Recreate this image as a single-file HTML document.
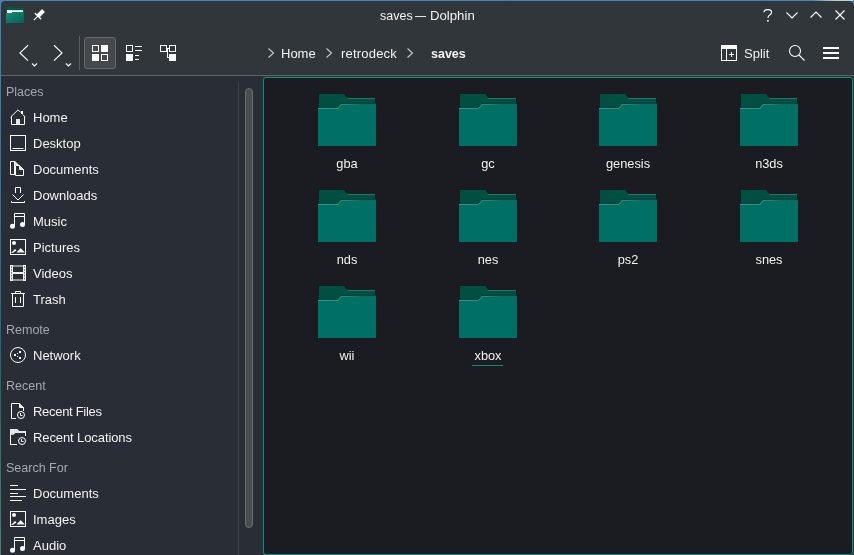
<!DOCTYPE html>
<html><head><meta charset="utf-8">
<style>
*{margin:0;padding:0;box-sizing:border-box}
html,body{width:854px;height:555px;overflow:hidden}
body{position:relative;background:linear-gradient(180deg,#4585b8 0px,#2f6f90 40%,#22686c 70%,#4a8272 100%);font-family:"Liberation Sans",sans-serif;color:#f2f2f2}
.a{position:absolute}
.t{position:absolute;white-space:nowrap;line-height:20px;will-change:transform}
svg{position:absolute;overflow:visible}
.hdr{color:#a1a9b1}
</style></head><body>
<div class="a" style="left:812px;top:0;width:41px;height:1px;background:linear-gradient(90deg,#4585b8,#b8d0c8 55%,#c0d6cc)"></div>
<div class="a" style="left:1px;top:1px;width:853px;height:554px;background:#31363b;border-radius:4px 5px 0 0"></div>
<svg style="left:6px;top:7px" width="18" height="16" viewBox="0 0 18 16">
<defs><linearGradient id="tg" x1="0" y1="0" x2="1" y2="1"><stop offset="0" stop-color="#1a8a7a"/><stop offset="1" stop-color="#006357"/></linearGradient></defs>
<path d="M0 0h7.5l1 1H18V16H0z" fill="#005a4c"/>
<path d="M1 3.2h16V5H1z" fill="#fafafa"/><path d="M1 3.2h5v2.8H1z" fill="#fafafa"/>
<path d="M0 6h5.5l1-1H18v11H0z" fill="url(#tg)"/>
</svg>
<svg style="left:33px;top:12px" width="12" height="12" viewBox="0 0 12 12">
<polygon points="9.1,-3 11.9,0 6.5,5.4 3.6,2.5" fill="#fcfcfc"/>
<path d="M2.3 1.4L7.7 6.7" stroke="#fcfcfc" stroke-width="1.4" stroke-linecap="round"/>
<path d="M4.6 4.3L1.3 7.6" stroke="#fcfcfc" stroke-width="1.2" stroke-linecap="round"/>
</svg>
<div class="t" style="left:380px;top:5.87px;font-size:12.5px">saves</div>
<div class="a" style="left:415px;top:16px;width:11px;height:1px;background:#e4e4e4"></div>
<div class="t" style="left:430px;top:5.63px;font-size:13.2px">Dolphin</div>
<svg style="left:763px;top:9px" width="10" height="13"><path d="M1 3.2C1 1.5 2.6 0.6 4.8 0.6S8.6 1.6 8.6 3.3c0 1.6-1.2 2.2-2.2 2.9-0.8 0.5-1.3 1-1.3 2.1V9" fill="none" stroke="#fcfcfc" stroke-width="1.1"/><rect x="4.1" y="11" width="1.6" height="1.6" fill="#fcfcfc"/></svg>
<svg style="left:786px;top:12px" width="14" height="8"><path d="M0.5 0.5l5.5 5.5 5.5-5.5" fill="none" stroke="#fcfcfc" stroke-width="1.2"/></svg>
<svg style="left:810px;top:11px" width="14" height="8"><path d="M0.5 6.5l5.5-5.5 5.5 5.5" fill="none" stroke="#fcfcfc" stroke-width="1.2"/></svg>
<svg style="left:835px;top:10px" width="12" height="12"><path d="M0.5 0.5l9 9M9.5 0.5l-9 9" fill="none" stroke="#fcfcfc" stroke-width="1.2"/></svg>
<svg style="left:18px;top:44px" width="12" height="20"><path d="M10 1.2L2 8.9l8 7.7" fill="none" stroke="#fcfcfc" stroke-width="1.2"/></svg>
<svg style="left:31px;top:62px" width="8" height="6"><path d="M1 1.5l2.5 2.5L6 1.5" fill="none" stroke="#fcfcfc" stroke-width="1.1"/></svg>
<svg style="left:53px;top:44px" width="12" height="20"><path d="M1 1.2l8 7.7-8 7.7" fill="none" stroke="#fcfcfc" stroke-width="1.2"/></svg>
<svg style="left:65px;top:62px" width="8" height="6"><path d="M1 1.5l2.5 2.5L6 1.5" fill="none" stroke="#fcfcfc" stroke-width="1.1"/></svg>
<div class="a" style="left:79px;top:36px;width:1px;height:34px;background:#5a5e63"></div>
<div class="a" style="left:84px;top:37px;width:32px;height:32px;border:1px solid #686c71;border-radius:3px;background:#45494e"></div>
<svg style="left:92px;top:45px" width="16" height="16" viewBox="0 0 16 16" fill="#fcfcfc">
<path d="M0 0h7v7H0zM1 1v5h5V1z"/><rect x="9" y="0" width="7" height="7"/><rect x="0" y="9" width="7" height="7"/><path d="M9 9h7v7H9zM10 10v5h5v-5z"/>
</svg>
<svg style="left:126px;top:45px" width="16" height="16" viewBox="0 0 16 16" fill="#fcfcfc">
<path d="M0 0h7v7H0zM1 1v5h5V1z"/><rect x="9" y="1" width="7" height="1"/><rect x="9" y="5" width="7" height="1"/><rect x="0" y="9" width="7" height="7"/><rect x="9" y="10" width="4" height="1"/><rect x="9" y="14" width="4" height="1"/>
</svg>
<svg style="left:160px;top:45px" width="16" height="16" viewBox="0 0 16 16" fill="#fcfcfc">
<path d="M0 0h7v7H0zM1 1v5h5V1z"/><path d="M9 0h7v7H9zM10 1v5h5V1z"/><rect x="7" y="3" width="2" height="1"/><rect x="7" y="3" width="1" height="10"/><rect x="7" y="12" width="2" height="1"/><rect x="9" y="9" width="7" height="7"/>
</svg>
<svg style="left:268px;top:48px" width="8" height="12"><path d="M0.5 0.5l5 4.5-5 4.5" fill="none" stroke="#c8cbce" stroke-width="1.1"/></svg>
<div class="t" style="left:281px;top:43.50px;font-size:13px">Home</div>
<svg style="left:326px;top:48px" width="8" height="12"><path d="M0.5 0.5l5 4.5-5 4.5" fill="none" stroke="#c8cbce" stroke-width="1.1"/></svg>
<div class="t" style="left:341px;top:43.50px;font-size:13px;letter-spacing:0.2px">retrodeck</div>
<svg style="left:407px;top:48px" width="8" height="12"><path d="M0.5 0.5l5 4.5-5 4.5" fill="none" stroke="#c8cbce" stroke-width="1.1"/></svg>
<div class="t" style="left:431px;top:43.67px;font-size:12.5px;font-weight:bold">saves</div>
<svg style="left:721px;top:45px" width="16" height="16" viewBox="0 0 16 16" fill="#fcfcfc">
<path d="M0 0h16v16H0zM1 4v11h4V4zM6 4v11h9V4z"/><rect x="10" y="7" width="1" height="5"/><rect x="8" y="9" width="5" height="1"/>
</svg>
<div class="t" style="left:744px;top:43.50px;font-size:13px">Split</div>
<svg style="left:789px;top:45px" width="18" height="18"><circle cx="6" cy="6" r="5.5" fill="none" stroke="#fcfcfc" stroke-width="1.1"/><path d="M10 10l5.5 5.5" stroke="#fcfcfc" stroke-width="1.1"/></svg>
<svg style="left:823px;top:47px" width="16" height="12" fill="#fcfcfc"><rect x="0" y="0" width="16" height="2"/><rect x="0" y="5" width="16" height="2"/><rect x="0" y="10" width="16" height="2"/></svg>
<div class="a" style="left:1px;top:75px;width:853px;height:1px;background:#5f6367"></div>
<div class="a" style="left:1px;top:76px;width:262px;height:479px;background:#292d36"></div>
<div class="a" style="left:238px;top:82px;width:1px;height:473px;background:#3e4347"></div>
<div class="a" style="left:245px;top:88px;width:8px;height:440px;border:1px solid #6a6e72;border-radius:4px;background:#4a4e52"></div>
<div class="t" style="left:6px;top:81.67px;font-size:12.5px;color:#a1a9b1">Places</div>
<svg style="left:10px;top:109px" width="16" height="16" viewBox="0 0 16 16"><path d="M0.6 8.2L8 0.8l2.6 2.6M12.6 5.4l2.8 2.8" fill="none" stroke="#fcfcfc" stroke-width="1"/><path d="M1.5 7.5v8h13v-8" fill="none" stroke="#fcfcfc" stroke-width="1"/><rect x="6" y="10" width="4" height="6" fill="#e8e8e8"/><rect x="11" y="2" width="2" height="3" fill="#fcfcfc"/></svg>
<div class="t" style="left:33px;top:107.50px;font-size:13px">Home</div>
<svg style="left:10px;top:135px" width="16" height="16" viewBox="0 0 16 16"><rect x="0.5" y="0.5" width="15" height="15" fill="none" stroke="#fcfcfc" stroke-width="1"/><path d="M2.5 13.5h11" fill="none" stroke="#fcfcfc" stroke-width="1"/></svg>
<div class="t" style="left:33px;top:133.50px;font-size:13px">Desktop</div>
<svg style="left:10px;top:161px" width="16" height="16" viewBox="0 0 16 16"><path d="M4.5 13.5H0.5V0.5H5" fill="none" stroke="#fcfcfc" stroke-width="1"/><path d="M4.5 1v13" fill="none" stroke="#fcfcfc" stroke-width="1"/><path d="M5 0L9 4H5z" fill="#e6e6e6"/><path d="M5.5 14.5V4.5h4l4 4v6z" fill="none" stroke="#fcfcfc" stroke-width="1"/><path d="M9.5 4.5v4h4" fill="none" stroke="#fcfcfc" stroke-width="1"/><path d="M9.5 4.5l4 4h-4z" fill="#e6e6e6"/></svg>
<div class="t" style="left:33px;top:159.50px;font-size:13px">Documents</div>
<svg style="left:10px;top:187px" width="16" height="16" viewBox="0 0 16 16"><path d="M5.5 6V0.5h5V6" fill="none" stroke="#fcfcfc" stroke-width="1"/><path d="M2.5 7.5L8 13l5.5-5.5" fill="none" stroke="#fcfcfc" stroke-width="1"/><path d="M1.5 14v1.5h13V14" fill="none" stroke="#fcfcfc" stroke-width="1"/></svg>
<div class="t" style="left:33px;top:185.50px;font-size:13px">Downloads</div>
<svg style="left:10px;top:213px" width="16" height="16" viewBox="0 0 16 16"><path d="M4.5 13V0.5h10V11.5" fill="none" stroke="#fcfcfc" stroke-width="1"/><path d="M4.5 3.5h10" fill="none" stroke="#fcfcfc" stroke-width="1"/><circle cx="2.5" cy="13.3" r="2.5" fill="#fcfcfc"/><circle cx="12.5" cy="11.6" r="2.5" fill="#fcfcfc"/></svg>
<div class="t" style="left:33px;top:211.50px;font-size:13px">Music</div>
<svg style="left:10px;top:239px" width="16" height="16" viewBox="0 0 16 16"><rect x="0.5" y="0.5" width="15" height="15" fill="none" stroke="#fcfcfc" stroke-width="1"/><circle cx="4" cy="4" r="2" fill="#fcfcfc"/><path d="M1 14l4-4 1.5 1.5L2.5 14z" fill="#fcfcfc"/><path d="M6.5 13.5L10.7 9l4 4.5z" fill="#fcfcfc"/></svg>
<div class="t" style="left:33px;top:237.50px;font-size:13px">Pictures</div>
<svg style="left:10px;top:265px" width="16" height="16" viewBox="0 0 16 16"><path d="M0 0h3v16H0zM13 0h3v16h-3z" fill="#f0f0f0"/><rect x="3" y="0" width="10" height="2" fill="#8e9194"/><rect x="3" y="14" width="10" height="2" fill="#8e9194"/><rect x="3" y="7" width="10" height="2" fill="#f0f0f0"/><rect x="1" y="1.4" width="1" height="1.4" fill="#5a5e64"/><rect x="1" y="4.3" width="1" height="1.4" fill="#5a5e64"/><rect x="1" y="7.2" width="1" height="1.4" fill="#5a5e64"/><rect x="1" y="10.1" width="1" height="1.4" fill="#5a5e64"/><rect x="1" y="12.9" width="1" height="1.4" fill="#5a5e64"/><rect x="14" y="1.4" width="1" height="1.4" fill="#5a5e64"/><rect x="14" y="4.3" width="1" height="1.4" fill="#5a5e64"/><rect x="14" y="7.2" width="1" height="1.4" fill="#5a5e64"/><rect x="14" y="10.1" width="1" height="1.4" fill="#5a5e64"/><rect x="14" y="12.9" width="1" height="1.4" fill="#5a5e64"/></svg>
<div class="t" style="left:33px;top:263.50px;font-size:13px">Videos</div>
<svg style="left:10px;top:291px" width="16" height="16" viewBox="0 0 16 16"><path d="M1 2.5h14" fill="none" stroke="#fcfcfc" stroke-width="1"/><path d="M5.5 2.5V0.5h5v2" fill="none" stroke="#fcfcfc" stroke-width="1"/><path d="M2.5 2.5v13h11v-13" fill="none" stroke="#fcfcfc" stroke-width="1"/><path d="M5.5 6v6M10.5 6v6" fill="none" stroke="#fcfcfc" stroke-width="1"/></svg>
<div class="t" style="left:33px;top:289.50px;font-size:13px">Trash</div>
<div class="t" style="left:6px;top:319.67px;font-size:12.5px;color:#a1a9b1">Remote</div>
<svg style="left:10px;top:347px" width="16" height="16" viewBox="0 0 16 16"><circle cx="8" cy="8" r="7.5" fill="none" stroke="#fcfcfc" stroke-width="1"/><rect x="4" y="7" width="2" height="2" fill="#fcfcfc"/><rect x="9" y="4" width="2" height="2" fill="#fcfcfc"/><rect x="9" y="10" width="2" height="2" fill="#fcfcfc"/><rect x="7" y="6" width="1" height="1" fill="#fcfcfc"/><rect x="7" y="9" width="1" height="1" fill="#fcfcfc"/></svg>
<div class="t" style="left:33px;top:345.50px;font-size:13px">Network</div>
<div class="t" style="left:6px;top:375.67px;font-size:12.5px;color:#a1a9b1">Recent</div>
<svg style="left:10px;top:403px" width="16" height="16" viewBox="0 0 16 16"><path d="M6 15.5H1.5V0.5h8l4 4V8" fill="none" stroke="#fcfcfc" stroke-width="1"/><path d="M9.5 0.5v4h4" fill="#e0e0e0" stroke="#fcfcfc"/><circle cx="11" cy="12" r="3.5" fill="none" stroke="#fcfcfc" stroke-width="1"/><path d="M10.5 10v2.5h2" fill="none" stroke="#fcfcfc" stroke-width="1"/></svg>
<div class="t" style="left:33px;top:401.50px;font-size:13px;letter-spacing:-0.3px">Recent Files</div>
<svg style="left:10px;top:429px" width="16" height="16" viewBox="0 0 16 16"><path d="M0 0h7l2 2h7v5h-1V4H5l-1.5 1.5H1V15h6v1H0z" fill="#f0f0f0"/><path d="M0 0h7l2 2h7v2H5l-1.5 1.5H0z" fill="#e8e8e8"/><circle cx="12" cy="12" r="3.5" fill="none" stroke="#fcfcfc" stroke-width="1"/><path d="M11.5 10v2.5h2" fill="none" stroke="#fcfcfc" stroke-width="1"/></svg>
<div class="t" style="left:33px;top:427.50px;font-size:13px;letter-spacing:-0.1px">Recent Locations</div>
<div class="t" style="left:6px;top:457.67px;font-size:12.5px;color:#a1a9b1">Search For</div>
<svg style="left:10px;top:485px" width="16" height="16" viewBox="0 0 16 16"><path d="M0 0.5h8M0 4.5h16M0 8.5h8M0 11.5h16M0 15.5h12" fill="none" stroke="#fcfcfc" stroke-width="1"/></svg>
<div class="t" style="left:33px;top:483.50px;font-size:13px">Documents</div>
<svg style="left:10px;top:511px" width="16" height="16" viewBox="0 0 16 16"><rect x="0.5" y="0.5" width="15" height="15" fill="none" stroke="#fcfcfc" stroke-width="1"/><circle cx="4" cy="4" r="2" fill="#fcfcfc"/><path d="M1 14l4-4 1.5 1.5L2.5 14z" fill="#fcfcfc"/><path d="M6.5 13.5L10.7 9l4 4.5z" fill="#fcfcfc"/></svg>
<div class="t" style="left:33px;top:509.50px;font-size:13px">Images</div>
<svg style="left:10px;top:537px" width="16" height="16" viewBox="0 0 16 16"><path d="M4.5 13V0.5h10V11.5" fill="none" stroke="#fcfcfc" stroke-width="1"/><path d="M4.5 3.5h10" fill="none" stroke="#fcfcfc" stroke-width="1"/><circle cx="2.5" cy="13.3" r="2.5" fill="#fcfcfc"/><circle cx="12.5" cy="11.6" r="2.5" fill="#fcfcfc"/></svg>
<div class="t" style="left:33px;top:535.50px;font-size:13px">Audio</div>
<div class="a" style="left:263px;top:77px;width:590px;height:478px;background:#1b1c21;border:1px solid #0b927e;border-radius:3px"></div>
<svg width="0" height="0" style="position:absolute"><defs><linearGradient id="fh" x1="0" y1="0" x2="58" y2="0" gradientUnits="userSpaceOnUse"><stop offset="0" stop-color="#3a9585"/><stop offset="0.45" stop-color="#2a8a7a"/><stop offset="0.75" stop-color="#007064"/></linearGradient></defs></svg>
<svg style="left:318px;top:94px" width="58" height="52" viewBox="0 0 58 52">
<path d="M1 0h25l3.5 4H57v48H1z" fill="#004f43"/>
<path d="M29.5 4H57v1H29z" fill="#2a7468"/>
<path d="M1 13h18.5l3.5-4H58v1H23.5l-3.5 4H0z" fill="#053f37"/>
<path d="M0 14h19.5l3.5-4H58v42H0z" fill="#007064"/>
<path d="M0 14h19.5l3.5-4H58v1H23.5l-3.5 4H0z" fill="url(#fh)"/>
</svg>
<div class="t" style="left:287px;width:120px;text-align:center;top:153.56px;font-size:12.8px">gba</div>
<svg style="left:459px;top:94px" width="58" height="52" viewBox="0 0 58 52">
<path d="M1 0h25l3.5 4H57v48H1z" fill="#004f43"/>
<path d="M29.5 4H57v1H29z" fill="#2a7468"/>
<path d="M1 13h18.5l3.5-4H58v1H23.5l-3.5 4H0z" fill="#053f37"/>
<path d="M0 14h19.5l3.5-4H58v42H0z" fill="#007064"/>
<path d="M0 14h19.5l3.5-4H58v1H23.5l-3.5 4H0z" fill="url(#fh)"/>
</svg>
<div class="t" style="left:427.67px;width:120px;text-align:center;top:153.56px;font-size:12.8px">gc</div>
<svg style="left:599px;top:94px" width="58" height="52" viewBox="0 0 58 52">
<path d="M1 0h25l3.5 4H57v48H1z" fill="#004f43"/>
<path d="M29.5 4H57v1H29z" fill="#2a7468"/>
<path d="M1 13h18.5l3.5-4H58v1H23.5l-3.5 4H0z" fill="#053f37"/>
<path d="M0 14h19.5l3.5-4H58v42H0z" fill="#007064"/>
<path d="M0 14h19.5l3.5-4H58v1H23.5l-3.5 4H0z" fill="url(#fh)"/>
</svg>
<div class="t" style="left:568.33px;width:120px;text-align:center;top:153.56px;font-size:12.8px">genesis</div>
<svg style="left:740px;top:94px" width="58" height="52" viewBox="0 0 58 52">
<path d="M1 0h25l3.5 4H57v48H1z" fill="#004f43"/>
<path d="M29.5 4H57v1H29z" fill="#2a7468"/>
<path d="M1 13h18.5l3.5-4H58v1H23.5l-3.5 4H0z" fill="#053f37"/>
<path d="M0 14h19.5l3.5-4H58v42H0z" fill="#007064"/>
<path d="M0 14h19.5l3.5-4H58v1H23.5l-3.5 4H0z" fill="url(#fh)"/>
</svg>
<div class="t" style="left:709px;width:120px;text-align:center;top:153.56px;font-size:12.8px">n3ds</div>
<svg style="left:318px;top:190px" width="58" height="52" viewBox="0 0 58 52">
<path d="M1 0h25l3.5 4H57v48H1z" fill="#004f43"/>
<path d="M29.5 4H57v1H29z" fill="#2a7468"/>
<path d="M1 13h18.5l3.5-4H58v1H23.5l-3.5 4H0z" fill="#053f37"/>
<path d="M0 14h19.5l3.5-4H58v42H0z" fill="#007064"/>
<path d="M0 14h19.5l3.5-4H58v1H23.5l-3.5 4H0z" fill="url(#fh)"/>
</svg>
<div class="t" style="left:287px;width:120px;text-align:center;top:249.56px;font-size:12.8px">nds</div>
<svg style="left:459px;top:190px" width="58" height="52" viewBox="0 0 58 52">
<path d="M1 0h25l3.5 4H57v48H1z" fill="#004f43"/>
<path d="M29.5 4H57v1H29z" fill="#2a7468"/>
<path d="M1 13h18.5l3.5-4H58v1H23.5l-3.5 4H0z" fill="#053f37"/>
<path d="M0 14h19.5l3.5-4H58v42H0z" fill="#007064"/>
<path d="M0 14h19.5l3.5-4H58v1H23.5l-3.5 4H0z" fill="url(#fh)"/>
</svg>
<div class="t" style="left:427.67px;width:120px;text-align:center;top:249.56px;font-size:12.8px">nes</div>
<svg style="left:599px;top:190px" width="58" height="52" viewBox="0 0 58 52">
<path d="M1 0h25l3.5 4H57v48H1z" fill="#004f43"/>
<path d="M29.5 4H57v1H29z" fill="#2a7468"/>
<path d="M1 13h18.5l3.5-4H58v1H23.5l-3.5 4H0z" fill="#053f37"/>
<path d="M0 14h19.5l3.5-4H58v42H0z" fill="#007064"/>
<path d="M0 14h19.5l3.5-4H58v1H23.5l-3.5 4H0z" fill="url(#fh)"/>
</svg>
<div class="t" style="left:568.33px;width:120px;text-align:center;top:249.56px;font-size:12.8px">ps2</div>
<svg style="left:740px;top:190px" width="58" height="52" viewBox="0 0 58 52">
<path d="M1 0h25l3.5 4H57v48H1z" fill="#004f43"/>
<path d="M29.5 4H57v1H29z" fill="#2a7468"/>
<path d="M1 13h18.5l3.5-4H58v1H23.5l-3.5 4H0z" fill="#053f37"/>
<path d="M0 14h19.5l3.5-4H58v42H0z" fill="#007064"/>
<path d="M0 14h19.5l3.5-4H58v1H23.5l-3.5 4H0z" fill="url(#fh)"/>
</svg>
<div class="t" style="left:709px;width:120px;text-align:center;top:249.56px;font-size:12.8px">snes</div>
<svg style="left:318px;top:286px" width="58" height="52" viewBox="0 0 58 52">
<path d="M1 0h25l3.5 4H57v48H1z" fill="#004f43"/>
<path d="M29.5 4H57v1H29z" fill="#2a7468"/>
<path d="M1 13h18.5l3.5-4H58v1H23.5l-3.5 4H0z" fill="#053f37"/>
<path d="M0 14h19.5l3.5-4H58v42H0z" fill="#007064"/>
<path d="M0 14h19.5l3.5-4H58v1H23.5l-3.5 4H0z" fill="url(#fh)"/>
</svg>
<div class="t" style="left:287px;width:120px;text-align:center;top:345.56px;font-size:12.8px">wii</div>
<svg style="left:459px;top:286px" width="58" height="52" viewBox="0 0 58 52">
<path d="M1 0h25l3.5 4H57v48H1z" fill="#004f43"/>
<path d="M29.5 4H57v1H29z" fill="#2a7468"/>
<path d="M1 13h18.5l3.5-4H58v1H23.5l-3.5 4H0z" fill="#053f37"/>
<path d="M0 14h19.5l3.5-4H58v42H0z" fill="#007064"/>
<path d="M0 14h19.5l3.5-4H58v1H23.5l-3.5 4H0z" fill="url(#fh)"/>
</svg>
<div class="t" style="left:427.67px;width:120px;text-align:center;top:345.56px;font-size:12.8px">xbox</div>
<div class="a" style="left:472px;top:365px;width:31px;height:1px;background:#0b8a76"></div>
</body></html>
